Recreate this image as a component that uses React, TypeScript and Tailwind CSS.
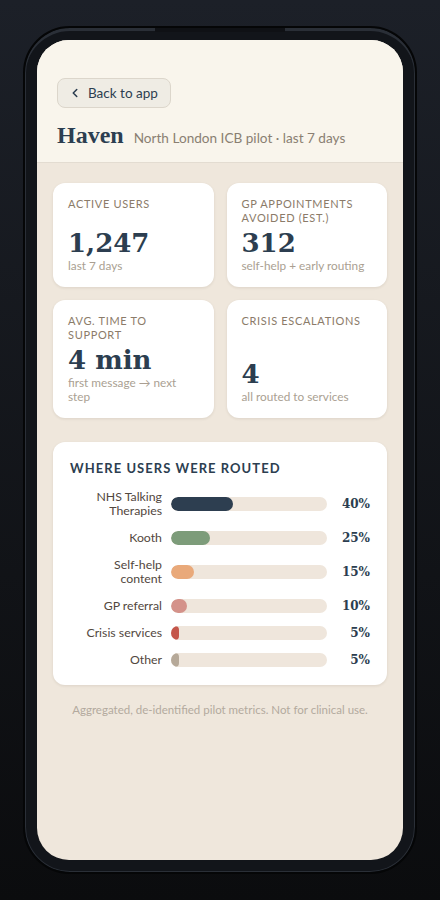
import React from "react";
import { ChevronLeft } from "lucide-react";

const sans = { fontFamily: '"Lato", "Noto Sans", sans-serif' };
const serif = { fontFamily: '"DejaVu Serif", serif' };
const headSerif = { fontFamily: '"Liberation Serif", serif' };

type Stat = { label: string; value: string; sub: string };

const stats: Stat[] = [
  { label: "Active users", value: "1,247", sub: "last 7 days" },
  { label: "GP appointments avoided (est.)", value: "312", sub: "self-help + early routing" },
  { label: "Avg. time to support", value: "4 min", sub: "first message \u2192 next step" },
  { label: "Crisis escalations", value: "4", sub: "all routed to services" },
];

const routes = [
  { label: "NHS Talking Therapies", pct: 40, color: "#2d3e50" },
  { label: "Kooth", pct: 25, color: "#7d9c7a" },
  { label: "Self-help content", pct: 15, color: "#e9a97a" },
  { label: "GP referral", pct: 10, color: "#d4928a" },
  { label: "Crisis services", pct: 5, color: "#c4564a" },
  { label: "Other", pct: 5, color: "#b6a999" },
];

function StatCard({ s }: { s: Stat }) {
  return (
    <div className="flex flex-col rounded-[12px] bg-white px-[15px] pt-[14px] pb-[14px] shadow-[0_1px_3px_rgba(60,40,20,0.10)]">
      <div className="text-[11px] leading-[14px] uppercase tracking-[0.06em] text-[#8b7b69]" style={sans}>
        {s.label}
      </div>
      <div className="mt-auto pt-[2px]">
        <div className="text-[26px] leading-[32px] font-bold text-[#2c3e50]" style={serif}>
          {s.value}
        </div>
        <div className="text-[11.8px] leading-[14px] text-[#aa9f92]" style={sans}>
          {s.sub}
        </div>
      </div>
    </div>
  );
}

export default function App() {
  return (
    <div className="flex h-[900px] w-full justify-center bg-gradient-to-b from-[#1c2028] to-[#0b0c0e] pt-[26px]">
      <div className="relative h-[848px] w-[394px] rounded-[47px] border-2 border-[#050607] bg-[#12151a] p-[12px] shadow-[inset_0_3px_0_#2a2f37,inset_0_0_0_1px_#2a2f37]">
        <div className="absolute left-1/2 top-0 h-[4px] w-[130px] -translate-x-1/2 bg-[#0f1115]" />
        <div className="flex h-full w-full flex-col overflow-hidden rounded-[32px] bg-[#efe7dc]">
          <div className="border-b border-[#e3dcd1] bg-[#f9f5ec] px-[20px] pt-[38px] pb-[12px]">
            <button
              className="flex h-[30px] items-center gap-[6px] rounded-[8px] border border-[#dcd6cb] bg-[#efece4] pl-[10px] pr-[12px] text-[13.5px] text-[#2c3e50]"
              style={sans}
            >
              <ChevronLeft size={14} strokeWidth={2.6} />
              <span>Back to app</span>
            </button>
            <div className="mt-[12px] flex items-baseline gap-[10px]">
              <span className="text-[24px] leading-[30px] font-bold text-[#2c3e50]" style={headSerif}>
                Haven
              </span>
              <span className="text-[13.6px] text-[#8a7f72]" style={sans}>
                North London ICB pilot · last 7 days
              </span>
            </div>
          </div>

          <div className="px-[16px] pt-[20px]">
            <div className="grid grid-cols-2 gap-[13px]">
              {stats.map((s) => (
                <StatCard key={s.label} s={s} />
              ))}
            </div>

            <div className="mt-[24px] rounded-[12px] bg-white px-[17px] pt-[18px] pb-[18px] shadow-[0_1px_3px_rgba(60,40,20,0.10)]">
              <div className="text-[13px] leading-[16px] font-bold uppercase tracking-[0.08em] text-[#2c3e50]" style={sans}>
                Where users were routed
              </div>
              <div className="mt-[14px] flex flex-col gap-[13px]">
                {routes.map((r) => (
                  <div key={r.label} className="flex items-center">
                    <div className="w-[92px] pl-[10px] text-right text-[12.3px] leading-[14px] text-[#52473e]" style={sans}>
                      {r.label}
                    </div>
                    <div className="ml-[9px] h-[14px] w-[156px] overflow-hidden rounded-full bg-[#efe6dc]">
                      <div
                        className="h-full rounded-full"
                        style={{ width: `${Math.max(r.pct * 1.56, 8)}px`, backgroundColor: r.color }}
                      />
                    </div>
                    <div className="flex-1 text-right text-[12px] leading-[14px] font-bold text-[#2c3e50]" style={serif}>
                      {r.pct}%
                    </div>
                  </div>
                ))}
              </div>
            </div>

            <div className="mt-[18px] text-center text-[11.5px] leading-[14px] text-[#b3aa9e]" style={sans}>
              Aggregated, de-identified pilot metrics. Not for clinical use.
            </div>
          </div>
        </div>
      </div>
    </div>
  );
}
